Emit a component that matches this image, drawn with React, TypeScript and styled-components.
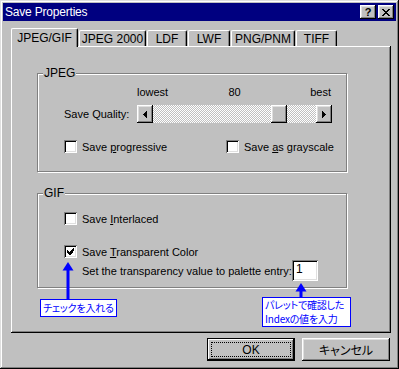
import styled, { createGlobalStyle } from "styled-components";

const GlobalStyle = createGlobalStyle`
  html, body {
    margin: 0;
    padding: 0;
    background: #c0c0c0;
  }
  body {
    font-family: "Liberation Sans", Arial, sans-serif;
    font-size: 11px;
    color: #000;
  }
`;

const Window = styled.div`
  position: relative;
  width: 399px;
  height: 369px;
  box-sizing: border-box;
  padding: 3px;
  background: #c0c0c0;
  box-shadow: inset -1px -1px #000, inset 1px 1px #dfdfdf,
    inset -2px -2px #808080, inset 2px 2px #fff;
  display: flex;
  flex-direction: column;
`;

const TitleBar = styled.div`
  height: 18px;
  background: #000080;
  color: #fff;
  display: flex;
  align-items: center;
  padding: 0 2px;
  font-size: 12px;
`;

const TitleText = styled.span`
  flex: 1;
  letter-spacing: -0.2px;
`;

const TitleButtons = styled.div`
  display: flex;
  gap: 2px;
`;

const raised = `
  background: #c0c0c0;
  box-shadow: inset -1px -1px #000, inset 1px 1px #fff,
    inset -2px -2px #808080, inset 2px 2px #dfdfdf;
`;

const CaptionButton = styled.div`
  ${raised}
  width: 16px;
  height: 14px;
  display: flex;
  align-items: center;
  justify-content: center;
  color: #000;
  font-weight: bold;
  font-size: 11px;
  line-height: 1;
`;

const Body = styled.div`
  display: flex;
  flex-direction: column;
  padding: 7px 0 0 8px;
`;

const TabRow = styled.div`
  display: flex;
  align-items: flex-end;
  gap: 1px;
  height: 18px;
`;

const Tab = styled.div<{ $w: number; $active?: boolean }>`
  position: relative;
  z-index: ${(p) => (p.$active ? 1 : 0)};
  box-sizing: border-box;
  width: ${(p) => p.$w}px;
  height: ${(p) => (p.$active ? 19 : 16)}px;
  margin-bottom: ${(p) => (p.$active ? -1 : 0)}px;
  background: #c0c0c0;
  border-top: 1px solid #fff;
  border-left: 1px solid #fff;
  border-right: 1px solid #000;
  border-radius: 2px 2px 0 0;
  box-shadow: inset -1px 0 #808080;
  display: flex;
  align-items: center;
  justify-content: center;
  padding-top: ${(p) => (p.$active ? 0 : 1)}px;
  font-size: 12px;
`;

const Panel = styled.div`
  box-sizing: border-box;
  width: 380px;
  height: 287px;
  padding: 27px 0 0 26px;
  box-shadow: inset -1px -1px #000, inset 1px 1px #fff,
    inset -2px -2px #808080;
  display: flex;
  flex-direction: column;
`;

const Group = styled.div<{ $h: number; $gap?: number }>`
  position: relative;
  box-sizing: border-box;
  width: 310px;
  height: ${(p) => p.$h}px;
  margin-top: ${(p) => p.$gap ?? 0}px;
  border: 1px solid #808080;
  box-shadow: inset 1px 1px #fff, 1px 1px #fff;
  padding-left: 26px;
  display: flex;
  flex-direction: column;
`;

const GroupLabel = styled.span`
  position: absolute;
  top: -8px;
  left: 5px;
  padding: 0 1px;
  background: #c0c0c0;
  font-size: 12px;
  line-height: 14px;
`;

const ScaleRow = styled.div`
  margin: 11px 0 0 73px;
  width: 195px;
  display: grid;
  grid-template-columns: 1fr auto 1fr;
  line-height: 14px;
  & > :last-child {
    justify-self: end;
    padding-right: 1px;
  }
`;

const SliderRow = styled.div`
  display: flex;
  align-items: center;
  margin-top: 6px;
`;

const FieldLabel = styled.span`
  width: 73px;
`;

const Slider = styled.div`
  display: flex;
  width: 195px;
  height: 18px;
`;

const SliderButton = styled.div`
  ${raised}
  width: 16px;
  height: 18px;
  display: flex;
  align-items: center;
  justify-content: center;
`;

const Track = styled.div`
  flex: 1;
  display: flex;
  background-color: #fff;
  background-image: repeating-conic-gradient(#c0c0c0 0 25%, #fff 0 50%);
  background-size: 2px 2px;
`;

const Spacer = styled.div<{ $grow: number }>`
  flex: ${(p) => p.$grow} 1 0;
`;

const Thumb = styled.div`
  ${raised}
  width: 16px;
  height: 18px;
`;

const CheckRow = styled.div<{ $top: number }>`
  display: flex;
  align-items: center;
  height: 13px;
  margin-top: ${(p) => p.$top}px;
`;

const CheckItem = styled.label<{ $w?: number }>`
  display: flex;
  align-items: center;
  gap: 5px;
  width: ${(p) => (p.$w ? `${p.$w}px` : "auto")};
  white-space: nowrap;
`;

const Box = styled.span`
  box-sizing: border-box;
  width: 13px;
  height: 13px;
  background: #fff;
  box-shadow: inset 1px 1px #808080, inset -1px -1px #fff,
    inset 2px 2px #000, inset -2px -2px #dfdfdf;
  display: flex;
  align-items: center;
  justify-content: center;
`;

const EntryRow = styled.div`
  display: flex;
  align-items: center;
  margin: 2px 0 0 18px;
`;

const EntryText = styled.span`
  width: 210px;
  white-space: nowrap;
`;

const Entry = styled.div`
  box-sizing: border-box;
  width: 26px;
  height: 21px;
  background: #fff;
  padding: 2px 0 0 4px;
  font-size: 12px;
  box-shadow: inset 1px 1px #808080, inset -1px -1px #fff,
    inset 2px 2px #000, inset -2px -2px #dfdfdf;
`;

const ButtonRow = styled.div`
  display: flex;
  justify-content: flex-end;
  gap: 7px;
  width: 379px;
  margin-top: 5px;
`;

const PushButton = styled.div<{ $default?: boolean }>`
  position: relative;
  box-sizing: border-box;
  width: 88px;
  height: 23px;
  display: flex;
  align-items: center;
  justify-content: center;
  font-size: 12px;
  background: #c0c0c0;
  box-shadow: ${(p) =>
    p.$default
      ? "inset 0 0 0 1px #000, inset -2px -2px #000, inset 2px 2px #fff, inset -3px -3px #808080"
      : "inset -1px -1px #000, inset 1px 1px #fff, inset -2px -2px #808080, inset 2px 2px #dfdfdf"};
  &::after {
    content: "";
    display: ${(p) => (p.$default ? "block" : "none")};
    position: absolute;
    inset: 4px;
    border: 1px dotted #000;
  }
`;

const Jp = styled.span`
  font-family: "Noto Sans CJK JP", sans-serif;
  font-feature-settings: "palt";
`;

const Callout = styled.div<{ $x: number; $y: number }>`
  position: absolute;
  left: ${(p) => p.$x}px;
  top: ${(p) => p.$y}px;
  display: flex;
  flex-direction: column;
  align-items: flex-start;
`;

const CalloutArrow = styled.svg<{ $off: number }>`
  display: block;
  margin-left: ${(p) => p.$off}px;
`;

const CalloutBox = styled.div<{ $w: number; $h: number }>`
  box-sizing: border-box;
  width: ${(p) => p.$w}px;
  height: ${(p) => p.$h}px;
  background: #fff;
  border: 1px solid #0000ff;
  color: #0000ff;
  font-family: "Noto Sans CJK JP", sans-serif;
  font-feature-settings: "palt";
  font-size: 10px;
  letter-spacing: -0.2px;
  padding: 0 0 0 2px;
  white-space: nowrap;
  overflow: hidden;
  display: flex;
  flex-direction: column;
  justify-content: center;
`;

const CalloutLine = styled.div`
  line-height: 14px;
  height: 14px;
`;

const U = styled.span`
  text-decoration: underline;
  text-underline-offset: 1px;
`;

const Check = () => (
  <svg width="7" height="7" viewBox="0 0 7 7" shapeRendering="crispEdges">
    <path
      d="M6 0h1v3h-1zM5 1h1v4h-1zM4 2h1v4h-1zM3 3h1v4h-1zM2 4h1v3h-1zM1 3h1v3h-1zM0 2h1v3h-1z"
      fill="#000"
    />
  </svg>
);

const Arrow = ({ dir }: { dir: "left" | "right" }) => (
  <svg width="4" height="7" viewBox="0 0 4 7" shapeRendering="crispEdges">
    <path
      d={
        dir === "left"
          ? "M3 0h1v7h-1zM2 1h1v5h-1zM1 2h1v3h-1zM0 3h1v1h-1z"
          : "M0 0h1v7h-1zM1 1h1v5h-1zM2 2h1v3h-1zM3 3h1v1h-1z"
      }
      fill="#000"
    />
  </svg>
);

const BlueArrow = ({ len, off }: { len: number; off: number }) => (
  <CalloutArrow $off={off} width="12" height={len} viewBox={`0 0 12 ${len}`}>
    <polygon points="6,0 0.5,8.5 11.5,8.5" fill="#0000ff" />
    <rect x="4.5" y="8" width="3" height={len - 8} fill="#0000ff" />
  </CalloutArrow>
);

const Checkbox = ({
  checked,
  w,
  children,
}: {
  checked?: boolean;
  w?: number;
  children: React.ReactNode;
}) => (
  <CheckItem $w={w}>
    <Box>{checked && <Check />}</Box>
    <span>{children}</span>
  </CheckItem>
);

const tabs = [
  { label: "JPEG/GIF", w: 67, active: true },
  { label: "JPEG 2000", w: 67 },
  { label: "LDF", w: 40 },
  { label: "LWF", w: 42 },
  { label: "PNG/PNM", w: 64 },
  { label: "TIFF", w: 41 },
];

const quality = 80;

export default function App() {
  return (
    <>
      <GlobalStyle />
      <Window>
        <TitleBar>
          <TitleText>Save Properties</TitleText>
          <TitleButtons>
            <CaptionButton>?</CaptionButton>
            <CaptionButton>
              <svg width="8" height="7" viewBox="0 0 8 7" shapeRendering="crispEdges">
                <path
                  d="M0 0h2v1h-2zM6 0h2v1h-2zM1 1h2v1h-2zM5 1h2v1h-2zM2 2h4v1h-4zM3 3h2v1h-2zM2 4h4v1h-4zM1 5h2v1h-2zM5 5h2v1h-2zM0 6h2v1h-2zM6 6h2v1h-2z"
                  fill="#000"
                />
              </svg>
            </CaptionButton>
          </TitleButtons>
        </TitleBar>

        <Body>
          <TabRow>
            {tabs.map((t) => (
              <Tab key={t.label} $w={t.w} $active={t.active}>
                {t.label}
              </Tab>
            ))}
          </TabRow>

          <Panel>
            <Group $h={99}>
              <GroupLabel>JPEG</GroupLabel>
              <ScaleRow>
                <span>lowest</span>
                <span>{quality}</span>
                <span>best</span>
              </ScaleRow>
              <SliderRow>
                <FieldLabel>Save Quality:</FieldLabel>
                <Slider>
                  <SliderButton>
                    <Arrow dir="left" />
                  </SliderButton>
                  <Track>
                    <Spacer $grow={quality} />
                    <Thumb />
                    <Spacer $grow={100 - quality} />
                  </Track>
                  <SliderButton>
                    <Arrow dir="right" />
                  </SliderButton>
                </Slider>
              </SliderRow>
              <CheckRow $top={17}>
                <Checkbox w={162}>
                  Save <U>p</U>rogressive
                </Checkbox>
                <Checkbox>
                  Save <U>a</U>s grayscale
                </Checkbox>
              </CheckRow>
            </Group>

            <Group $h={95} $gap={21}>
              <GroupLabel>GIF</GroupLabel>
              <CheckRow $top={18}>
                <Checkbox>
                  Save <U>I</U>nterlaced
                </Checkbox>
              </CheckRow>
              <CheckRow $top={20}>
                <Checkbox checked>
                  Save <U>T</U>ransparent Color
                </Checkbox>
              </CheckRow>
              <EntryRow>
                <EntryText>Set the transparency value to palette entry:</EntryText>
                <Entry>1</Entry>
              </EntryRow>
            </Group>
          </Panel>

          <ButtonRow>
            <PushButton $default>OK</PushButton>
            <PushButton>
              <Jp>キャンセル</Jp>
            </PushButton>
          </ButtonRow>
        </Body>

        <Callout $x={40} $y={262}>
          <BlueArrow len={37} off={22} />
          <CalloutBox $w={77} $h={18}>
            <CalloutLine>チェックを入れる</CalloutLine>
          </CalloutBox>
        </Callout>

        <Callout $x={262} $y={283}>
          <BlueArrow len={14} off={33} />
          <CalloutBox $w={89} $h={30}>
            <CalloutLine>パレットで確認した</CalloutLine>
            <CalloutLine>Indexの値を入力</CalloutLine>
          </CalloutBox>
        </Callout>
      </Window>
    </>
  );
}
